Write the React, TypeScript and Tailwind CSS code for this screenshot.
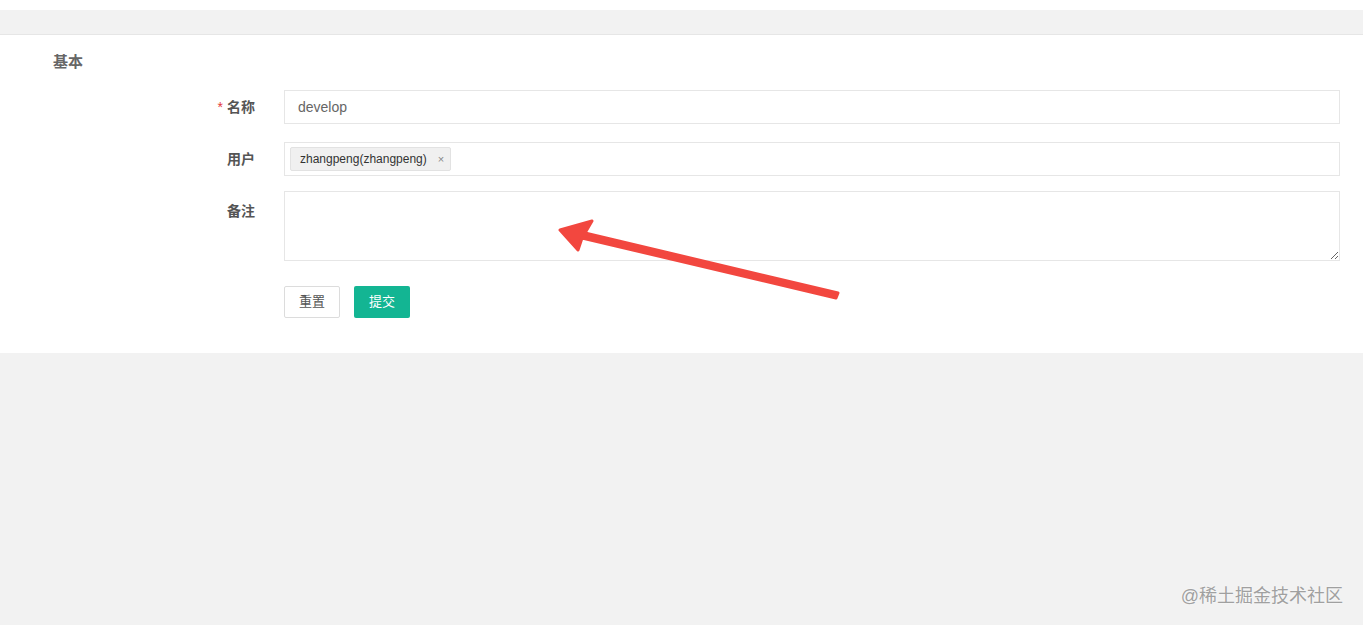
import React from 'react'

const FONT = "font-['Liberation_Sans','Noto_Sans_CJK_SC',sans-serif]"

function Label({ text, required }: { text: string; required?: boolean }) {
  return (
    <div className="w-[255px] shrink-0 text-right text-[14px] font-bold text-[#555]">
      {required && <span className="text-[#e4393c] mr-[4px] font-normal">*</span>}
      {text}
    </div>
  )
}

export default function App() {
  return (
    <div className={`${FONT} w-full h-[625px] bg-[#f2f2f2] relative overflow-hidden`}>
      <div className="h-[10px] bg-white" />
      <div className="h-[25px] bg-[#f2f2f2] border-b border-[#e6e6e6]" />

      {/* form panel */}
      <div className="bg-white h-[318px] pt-[17px]">
        <div className="pl-[53px] text-[15px] font-bold text-[#666] leading-[20px]">基本</div>

        <div className="mt-[18px] flex items-center">
          <Label text="名称" required />
          <div className="ml-[29px] mr-[23px] flex-1 h-[34px] border border-[#e6e6e6] flex items-center pl-[13px] text-[14px] text-[#666]">
            develop
          </div>
        </div>

        <div className="mt-[18px] flex items-center">
          <Label text="用户" />
          <div className="ml-[29px] mr-[23px] flex-1 h-[34px] border border-[#e6e6e6] flex items-center pl-[5px]">
            <span className="h-[24px] flex items-center pl-[9px] pr-[6px] bg-[#f0f0f0] border border-[#e2e2e2] rounded-[2px] text-[12px] text-[#333]">
              zhangpeng(zhangpeng)
              <span className="ml-[11px] text-[11px] text-[#888]">×</span>
            </span>
          </div>
        </div>

        <div className="mt-[15px] flex items-start">
          <div className="pt-[10px]">
            <Label text="备注" />
          </div>
          <textarea
            className="ml-[29px] mr-[23px] flex-1 h-[70px] border border-[#e6e6e6] outline-none resize-y"
            defaultValue=""
          />
        </div>

        <div className="mt-[25px] flex pl-[284px] gap-[14px]">
          <button className="w-[56px] h-[32px] border border-[#dcdcdc] rounded-[2px] bg-white text-[13px] text-[#555]">
            重置
          </button>
          <button className="w-[56px] h-[32px] rounded-[2px] bg-[#13b593] text-[13px] text-white">
            提交
          </button>
        </div>
      </div>

      {/* annotation arrow */}
      <svg className="absolute left-0 top-0 pointer-events-none" width="1363" height="625">
        <polygon
          points="838,293 836,298 582,238 578,250 560,230 592,221 585,233"
          fill="#f2473f"
          strokeLinejoin="round"
          stroke="#f2473f"
          strokeWidth="3"
        />
      </svg>

      <div className="absolute right-[20px] top-[583px] text-[18px] text-[#a0a0a0] [text-shadow:0_0_2px_#fff]">
        @稀土掘金技术社区
      </div>
    </div>
  )
}
